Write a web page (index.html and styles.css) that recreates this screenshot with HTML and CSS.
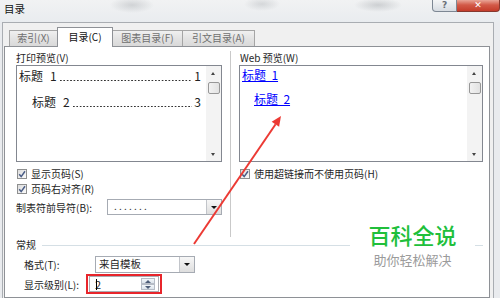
FILE: index.html
```html
<!DOCTYPE html>
<html lang="zh">

<head>
    <meta charset="UTF-8">
    <meta name="viewport" content="width=device-width, initial-scale=1.0">
    <title>目录</title>
    <link rel="stylesheet" href="styles.css">
</head>

<body>

    <div class="titlebar">
        <span class="title">目录</span>
        <div class="caption">
            <span class="cap-help">?</span>
            <span class="cap-close">✕</span>
        </div>
    </div>

    <div class="dialog">
        <div class="tabs">
            <span class="tab">索引(X)</span>
            <span class="tab active">目录(C)</span>
            <span class="tab">图表目录(F)</span>
            <span class="tab">引文目录(A)</span>
        </div>

        <div class="panel">
            <div class="columns">
                <div class="col-left">
                    <div class="label">打印预览(V)</div>
                    <div class="listbox">
                        <div class="list-body print">
                            <div class="toc-row">
                                <span>标题</span><span class="toc-num">1</span><span class="dots"></span><span>1</span>
                            </div>
                            <div class="toc-row lvl2">
                                <span>标题</span><span class="toc-num">2</span><span class="dots"></span><span>3</span>
                            </div>
                        </div>
                        <div class="scrollbar">
                            <span class="sb-btn up"></span>
                            <span class="sb-thumb"></span>
                            <span class="sb-track"></span>
                            <span class="sb-btn down"></span>
                        </div>
                    </div>

                    <div class="check">
                        <span class="box"><svg viewBox="0 0 8 8"><path d="M1.2 4.2 L3.2 6.6 L7 1.2" /></svg></span>
                        显示页码(S)
                    </div>
                    <div class="check">
                        <span class="box"><svg viewBox="0 0 8 8"><path d="M1.2 4.2 L3.2 6.6 L7 1.2" /></svg></span>
                        页码右对齐(R)
                    </div>

                    <div class="leader-row">
                        <span class="leader-label">制表符前导符(B):</span>
                        <div class="combo leader">
                            <span class="combo-text">. . . . . . .</span>
                            <span class="drop"></span>
                        </div>
                    </div>
                </div>

                <div class="col-right">
                    <div class="label web-label">Web 预览(W)</div>
                    <div class="listbox web">
                        <div class="list-body">
                            <div class="web-row"><a class="web-link">标题&nbsp;&nbsp;1</a></div>
                            <div class="web-row lvl2"><a class="web-link">标题&nbsp;&nbsp;2</a></div>
                        </div>
                        <div class="scrollbar">
                            <span class="sb-btn up"></span>
                            <span class="sb-thumb"></span>
                            <span class="sb-track"></span>
                            <span class="sb-btn down"></span>
                        </div>
                    </div>

                    <div class="check">
                        <span class="box"><svg viewBox="0 0 8 8"><path d="M1.2 4.2 L3.2 6.6 L7 1.2" /></svg></span>
                        使用超链接而不使用页码(H)
                    </div>
                </div>
            </div>

            <div class="general">
                <div class="group-title">
                    <span>常规</span>
                    <span class="rule"></span>
                </div>
                <div class="field-row">
                    <span class="field-label">格式(T):</span>
                    <div class="combo format">
                        <span class="combo-text">来自模板</span>
                        <span class="drop"></span>
                    </div>
                </div>
                <div class="field-row">
                    <span class="field-label">显示级别(L):</span>
                    <div class="hilite">
                        <div class="spinner">
                            <span class="spin-text"><span class="caret"></span>2</span>
                            <span class="spin-btns">
                                <span class="spin up"></span>
                                <span class="spin down"></span>
                            </span>
                        </div>
                    </div>
                </div>
            </div>
        </div>
    </div>

    <svg class="arrow" viewBox="0 0 500 298">
        <line x1="194" y1="244" x2="275.6" y2="124.3" />
        <polygon points="281,116 279.1,126.8 271.7,121.8" />
    </svg>

    <div class="watermark">
        <div class="wm-big">百科全说</div>
        <div class="wm-small">助你轻松解决</div>
    </div>

</body>

</html>
```

FILE: styles.css
```css
* {
    box-sizing: border-box;
}

body {
    margin: 0;
    width: 500px;
    height: 298px;
    overflow: hidden;
    position: relative;
    background: #e9ebee;
    font-family: "Noto Sans CJK SC", "DejaVu Sans", sans-serif;
    font-size: 10px;
    color: #1e1e1e;
}

/* title bar */
.titlebar {
    height: 22px;
    display: flex;
    align-items: flex-start;
    background:
        radial-gradient(ellipse 22px 8px at 132px 5px, rgba(150, 155, 160, .35), transparent),
        radial-gradient(ellipse 18px 7px at 262px 4px, rgba(150, 155, 160, .3), transparent),
        radial-gradient(ellipse 24px 7px at 378px 5px, rgba(140, 145, 150, .35), transparent),
        linear-gradient(#f1f2f3, #e9ecef);
}

.title {
    padding: 2px 0 0 4px;
    font-size: 10.5px;
    line-height: 14px;
    color: #111;
}

.caption {
    margin-left: auto;
    display: flex;
}

.cap-help {
    width: 25px;
    height: 12px;
    border: 1px solid #7d8793;
    border-top: none;
    border-radius: 0 0 0 4px;
    background: linear-gradient(#f4f5f6, #d7dce2);
    color: #6a7077;
    font-family: "DejaVu Sans", sans-serif;
    font-size: 9px;
    font-weight: bold;
    line-height: 10px;
    text-align: center;
}

.cap-close {
    width: 43px;
    height: 12px;
    border: 1px solid #86382e;
    border-top: none;
    border-left: none;
    border-radius: 0 0 4px 0;
    background: linear-gradient(#e9a597, #d25a48 45%, #c43c2a);
    color: #fff;
    font-family: "DejaVu Sans", sans-serif;
    font-size: 9px;
    font-weight: bold;
    line-height: 10px;
    text-align: center;
}

/* dialog frame + tabs */
.dialog {
    margin-left: 2px;
    width: 492px;
    height: 276px;
    border: 1px solid #a9adb2;
    border-bottom: none;
    background: #f0f0f0;
    padding-top: 4px;
}

.tabs {
    display: flex;
    align-items: flex-end;
    height: 19px;
    padding-left: 6px;
}

.tab {
    height: 16px;
    border: 1px solid #a5a5a5;
    border-bottom: none;
    background: linear-gradient(#f0f0f0, #e3e3e3 50%, #d9d9d9);
    color: #707070;
    line-height: 14px;
    text-align: center;
}

.tab:nth-child(1) { width: 49px; }
.tab:nth-child(2) { width: 56px; }
.tab:nth-child(3) { width: 71px; }
.tab:nth-child(4) { width: 73px; }

.tab + .tab {
    margin-left: -1px;
}

.tab.active {
    height: 20px;
    margin-bottom: -1px;
    border-color: #8e9196;
    background: #fff;
    color: #111;
    line-height: 17px;
    position: relative;
    z-index: 1;
}

.panel {
    margin-left: 1px;
    width: 486px;
    height: 252px;
    border: 1px solid #8e9196;
    background: #fff;
    padding: 4px 6px 0 11px;
}

.columns {
    display: flex;
    height: 186px;
}

.col-left {
    width: 206px;
}

.col-right {
    width: 253px;
    margin-left: 8px;
    padding-left: 8px;
    border-left: 1px solid #c9c9c9;
}

.label {
    height: 14px;
    line-height: 14px;
}

.web-label {
    padding-left: 1px;
}

/* list boxes */
.listbox {
    height: 97px;
    border: 1px solid #838790;
    display: flex;
    background: #fff;
}

.list-body {
    flex: 1;
    padding: 1px 5px 0 2px;
}

.list-body.print {
    padding-top: 2px;
}

.toc-row {
    display: flex;
    align-items: flex-start;
    height: 16px;
    font-size: 12px;
    line-height: 16px;
    color: #222;
}

.toc-row.lvl2 {
    margin-top: 10px;
    padding-left: 13px;
}

.toc-num {
    margin-left: 7px;
}

.dots {
    flex: 1;
    height: 13px;
    margin: 0 2px 0 3px;
    background: linear-gradient(90deg, #333 1.3px, transparent 1.3px) 0 100% / 3.4px 1.3px repeat-x;
}

.web-row {
    height: 16px;
    font-size: 12px;
    line-height: 16px;
}

.web-row.lvl2 {
    margin-top: 8px;
    padding-left: 12px;
}

.web-link {
    color: #0000ff;
    text-decoration: underline;
}

.scrollbar {
    width: 15px;
    display: flex;
    flex-direction: column;
    background: #f3f3f3;
}

.sb-btn {
    height: 15px;
    position: relative;
}

.sb-btn::after {
    content: "";
    position: absolute;
    left: 5px;
    border-left: 2.5px solid transparent;
    border-right: 2.5px solid transparent;
}

.sb-btn.up::after {
    top: 6px;
    border-bottom: 3px solid #444;
}

.sb-btn.down::after {
    top: 7px;
    border-top: 3px solid #444;
}

.sb-thumb {
    height: 12px;
    margin: 1px 1px 0 2px;
    border: 1px solid #979797;
    border-radius: 2px;
    background: linear-gradient(90deg, #f2f2f2, #e2e2e2);
}

.sb-track {
    flex: 1;
}

/* check boxes */
.check {
    display: flex;
    align-items: center;
    gap: 4px;
    height: 15px;
    padding-left: 1px;
}

.listbox + .check {
    margin-top: 4px;
}

.box {
    width: 10px;
    height: 10px;
    border: 1px solid #8e8f8f;
    background: linear-gradient(135deg, #dcdcdc, #fbfbfb);
    display: flex;
}

.box svg {
    width: 8px;
    height: 8px;
    fill: none;
    stroke: #4a5d86;
    stroke-width: 1.5;
}

/* combos */
.leader-row {
    display: flex;
    align-items: center;
    margin-top: 3px;
    height: 16px;
}

.leader-label {
    width: 91px;
}

.combo {
    display: flex;
    border: 1px solid #a6abb3;
    background: #fff;
}

.combo.leader {
    width: 115px;
    height: 16px;
}

.combo.format {
    width: 100px;
    height: 17px;
}

.combo-text {
    flex: 1;
    padding-left: 4px;
    line-height: 14px;
}

.leader .combo-text {
    padding-left: 6px;
    color: #333;
    line-height: 11px;
}

.format .combo-text {
    font-size: 10.5px;
    padding-left: 3px;
}

.drop {
    width: 15px;
    border-left: 1px solid #c2c5ca;
    background: linear-gradient(#f7f7f7, #dedede);
    position: relative;
}

.drop::after {
    content: "";
    position: absolute;
    left: 4px;
    top: 6px;
    border-left: 3px solid transparent;
    border-right: 3px solid transparent;
    border-top: 3px solid #111;
}

/* general group */
.general {
    margin-top: 1px;
}

.group-title {
    display: flex;
    align-items: center;
    height: 14px;
    line-height: 14px;
}

.rule {
    flex: 1;
    height: 1px;
    margin-left: 6px;
    background: #d5dfe5;
}

.field-row {
    display: flex;
    align-items: center;
    padding-left: 8px;
    margin-top: 4px;
    height: 17px;
}

.field-row + .field-row {
    margin-top: 1px;
    height: 20px;
}

.field-label {
    width: 71px;
}

.hilite {
    margin-left: -9px;
    width: 76px;
    height: 20px;
    border: 2px solid #e8252b;
    padding: 0 1px;
}

.spinner {
    display: flex;
    height: 16px;
    border: 1px solid #abadb3;
    background: #fff;
}

.spin-text {
    flex: 1;
    padding-left: 5px;
    font-size: 11px;
    line-height: 14px;
    position: relative;
}

.caret {
    position: absolute;
    left: 6px;
    top: 2px;
    height: 11px;
    border-left: 1px solid #000;
}

.spin-btns {
    width: 14px;
    margin: 1px 3px 1px 0;
    display: flex;
    flex-direction: column;
}

.spin {
    flex: 1;
    border: 1px solid #b6bcc6;
    background: linear-gradient(#f3f6fa, #dde4ec);
    position: relative;
}

.spin::after {
    content: "";
    position: absolute;
    left: 3px;
    top: 1px;
    border-left: 3px solid transparent;
    border-right: 3px solid transparent;
}

.spin.up::after {
    border-bottom: 3px solid #4d5d78;
}

.spin.down::after {
    border-top: 3px solid #4d5d78;
}

/* overlays */
.arrow {
    position: absolute;
    left: 0;
    top: 0;
    width: 500px;
    height: 298px;
    pointer-events: none;
}

.arrow line {
    stroke: #ec3a34;
    stroke-width: 2;
}

.arrow polygon {
    fill: #ec3a34;
}

.watermark {
    position: absolute;
    left: 350px;
    top: 223px;
    width: 125px;
    background: #fff;
    text-align: center;
}

.wm-big {
    font-size: 22px;
    line-height: 22px;
    font-weight: 500;
    color: #20bf3b;
}

.wm-small {
    margin-top: 8px;
    font-size: 13px;
    line-height: 14px;
    color: #9b9b9b;
}
```
